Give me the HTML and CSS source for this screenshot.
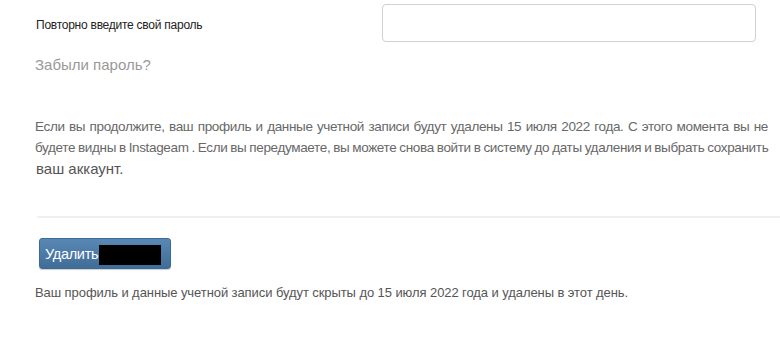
FILE: index.html
```html
<!DOCTYPE html>
<html lang="ru">
<head>
<meta charset="utf-8">
<link rel="stylesheet" href="styles.css">
</head>
<body>
<div class="page">
  <div class="field-row">
    <label class="field-label">Повторно введите свой пароль</label>
    <input class="field-input" type="password">
  </div>
  <a class="forgot">Забыли пароль?</a>
  <p class="notice">
    <span class="line line-first">Если вы продолжите, ваш профиль и данные учетной записи будут удалены 15 июля 2022 года. С этого момента вы не</span>
    <span class="line line-second">будете видны в Instageam . Если вы передумаете, вы можете снова войти в систему до даты удаления и выбрать сохранить</span>
    <span class="line line-big">ваш аккаунт.</span>
  </p>
  <hr class="divider">
  <button class="delete-btn">Удалить<span class="redact"></span></button>
  <p class="footnote">Ваш профиль и данные учетной записи будут скрыты до 15 июля 2022 года и удалены в этот день.</p>
</div>
</body>
</html>
```

FILE: styles.css
```css
html, body {
  margin: 0;
  padding: 0;
  background: #fff;
}
body {
  font-family: "Liberation Sans", Arial, sans-serif;
  width: 780px;
  height: 342px;
  overflow: hidden;
}
.page {
  padding: 4px 0 0 35px;
}
.field-row {
  display: flex;
  align-items: center;
  height: 38px;
}
.field-label {
  width: 346px;
  font-size: 12px;
  letter-spacing: -0.25px;
  color: #222;
  padding-left: 1px;
  position: relative;
  top: 2px;
}
.field-input {
  width: 374px;
  height: 38px;
  box-sizing: border-box;
  border: 1px solid #d0d0d0;
  border-radius: 4px;
  background: #fff;
  margin: 0;
  padding: 0;
}
.forgot {
  display: block;
  margin-top: 13px;
  font-size: 15px;
  color: #999;
  line-height: 20px;
}
.notice {
  margin: 41px 0 0 0;
  font-size: 13.5px;
  letter-spacing: -0.35px;
  line-height: 21px;
  color: #686868;
}
.line {
  display: block;
  white-space: nowrap;
}
.line-first {
  word-spacing: 1px;
}
.line-second {
  word-spacing: -0.5px;
}
.line-big {
  font-size: 15px;
  letter-spacing: 0;
  color: #555;
  padding-left: 1px;
}
.divider {
  margin: 37px 0 0 2px;
  border: 0;
  border-top: 2px solid #f0f0f0;
  height: 0;
}
.delete-btn {
  display: flex;
  align-items: center;
  margin: 20px 0 0 4px;
  width: 132px;
  height: 31px;
  padding: 0 0 0 5px;
  border: 1px solid #3e6a93;
  border-radius: 3px;
  background: linear-gradient(#5a88b4, #3f6d98);
  color: #fff;
  font-family: "Liberation Sans", Arial, sans-serif;
  font-size: 14.5px;
  letter-spacing: -0.3px;
  box-shadow: 0 1px 1px rgba(0,0,0,0.2);
}
.redact {
  display: inline-block;
  width: 62px;
  height: 20px;
  background: #000;
  margin-top: 2px;
  margin-left: 1px;
}
.footnote {
  margin: 16px 0 0 0;
  font-size: 13px;
  letter-spacing: -0.08px;
  color: #555;
  line-height: 16px;
}
```
